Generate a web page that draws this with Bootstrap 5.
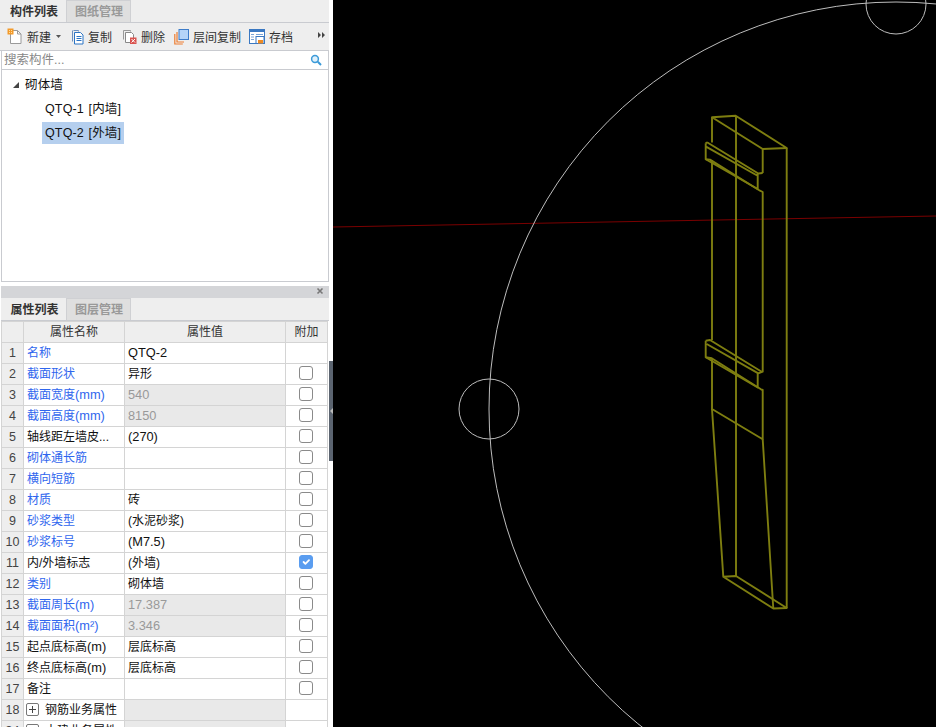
<!DOCTYPE html>
<html lang="zh">
<head>
<meta charset="utf-8">
<link href="https://cdn.jsdelivr.net/npm/bootstrap@5.3.0/dist/css/bootstrap.min.css" rel="stylesheet">
<style>
html,body{height:727px;overflow:hidden;background:#000}
body{font-family:"Liberation Sans","Noto Sans CJK SC",sans-serif;font-size:12.5px;line-height:1;color:#222}
.shell{height:727px}
.side{width:333px;flex:none;background:#fff;overflow:hidden}
.stage{flex:1;background:#000;position:relative;overflow:hidden}
.stage svg{display:block;width:100%;height:100%}
.tabrow{height:23px;background:#eeeeee;border-bottom:1px solid #c9cbd0;margin-right:4px}
.tabitem{width:66px;height:22px;padding:1px 0 0 2px;display:flex;align-items:center;justify-content:center;font-size:12px;font-weight:700;color:#333}
.tabitem.off{width:65px;background:#dfdfdf;color:#999;border:1px solid #cfd0d3;border-bottom:0;font-weight:700;padding:0 0 0 1px}
.tools{height:28px;background:#eeeeee;border-bottom:1px solid #c9cbd0;margin-right:4px;padding-left:7px;position:relative}
.tl{display:flex;align-items:center;color:#333;font-size:12px;white-space:nowrap}
.tl svg{flex:none;display:block}
.tl span{padding-top:2px}
.more{position:absolute;left:318px;top:9px;font-size:0}
.searchbar{height:19px;margin:0 4px 0 1px;border-left:1px solid #c9cbd0;border-right:1px solid #c9cbd0;border-bottom:1px solid #c9cbd0;padding-left:2px;color:#888;font-size:12.5px;background:#fff}
.treebox{height:212px;margin:0 4px 0 1px;border:1px solid #c9cbd0;border-top:0;background:#fff;padding-top:3px}
.treeline{height:24px;display:flex;align-items:center}
.treeline.kid{padding-left:40px}
.treeline .lbl{padding:0 3px;height:22px;display:flex;align-items:center;color:#111;font-size:12.5px;word-spacing:1px;letter-spacing:.15px}
.treeline .lbl.sel{background:#b5cfee}
.root{padding-left:11px;gap:6px}
.gap5{height:4px;margin-right:4px;background:#fff}
.closebar{height:12px;margin:0 4px 0 1px;background:#d4d5d8;position:relative;font-size:9px}
.xmark{position:absolute;left:315px;top:1px}
.tabrow.low{margin:0 4px 0 1px;height:23px}
.tabrow.low .tabitem{width:65px}
.tabrow.low .tabitem.off{padding-top:1px}
.tablewrap{margin-left:1px;width:327px;position:relative}
.table.proptable{table-layout:fixed;width:326px;margin:0;border-collapse:collapse;font-size:12px;--bs-table-bg:transparent}
.table.proptable>:not(caption)>*>*{padding:0 3px;height:21px;border:1px solid #d4d4d4;vertical-align:middle;color:#111;white-space:nowrap;overflow:hidden;line-height:1;box-shadow:none}
.table.proptable>thead>tr>th{background:#eeeeee;font-weight:400;text-align:center;color:#333}
.table.proptable>tbody>tr>td.idx{background:#eeeeee;text-align:center;color:#444;padding:0;font-size:12.5px}
.table.proptable>tbody>tr>td.blu{color:#2f66ee}
.table.proptable>tbody>tr>td.ro{background:#e9e9e9;color:#999}
.table.proptable>tbody>tr>td.ctr{text-align:center;padding:0}
.lat{font-size:12.8px}
.tick{width:14px;height:14px;border:1px solid #8a8a8a;border-radius:3px;display:block;float:none}
.form-check-input.tick{margin:-2px 7px 0 13px;border-radius:3px}
.tick:checked{background-color:#5a9df0;border-color:#5a9df0}
.plusbox{display:inline-flex;width:13px;height:13px;border:1px solid #777;border-radius:2px;align-items:center;justify-content:center;margin:-2px 6px 0 -1px;vertical-align:middle}
.gripbar{position:absolute;left:329px;top:361px;width:4px;height:100px;background:#5b6470}
.griptri{position:absolute;left:330px;top:408px}
</style>
</head>
<body>
<div class="shell d-flex">
  <div class="side position-relative">
    <div class="tabrow d-flex">
      <div class="tabitem">构件列表</div>
      <div class="tabitem off">图纸管理</div>
    </div>
    <div class="tools d-flex align-items-center">
      <div class="tl" style="width:64px">
        <svg width="16" height="17" viewBox="0 0 16 17" class="me-1"><path d="M3.5 2.5h7l3.5 3.5v9.5H3.5z" fill="#fff" stroke="#9a9a9a"/><path d="M10.5 2.5V6H14" fill="none" stroke="#9a9a9a"/><rect x="0.5" y="0.5" width="6" height="6" fill="#f39a2a"/><path d="M2 2h1v1H2zM4 4h1v1H4zM4 2h1v1H4zM2 4h1v1H2z" fill="#ffe0a0"/></svg>
        <span>新建</span>
        <svg width="5" height="3" viewBox="0 0 5 3" class="ms-auto" style="margin-right:10px"><path d="M0 0h5L2.5 3z" fill="#555"/></svg>
      </div>
      <div class="tl" style="width:51px">
        <svg width="13" height="16" viewBox="0 0 13 16" class="me-1"><path d="M2.5 1.5h5v1" fill="none" stroke="#6b8fc0"/><path d="M1.5 1.5v11" stroke="#6b8fc0"/><path d="M3.5 3.5h6l2.5 2.5v9H3.5z" fill="#fff" stroke="#2c74c4"/><path d="M5.5 7.5h5M5.5 9.5h5M5.5 11.5h5" stroke="#2c74c4"/></svg>
        <span>复制</span>
      </div>
      <div class="tl" style="width:52px">
        <svg width="15" height="15" viewBox="0 0 15 15" class="me-1"><path d="M1.5 1.5h7v1M1.5 1.5v9" fill="none" stroke="#999"/><path d="M3.5 3.5h6l2 2v8h-8z" fill="#fff" stroke="#888"/><rect x="8" y="8.5" width="6.5" height="6.5" fill="#d9534f"/><path d="M9.5 10l3.5 3.5M13 10l-3.5 3.5" stroke="#fff"/></svg>
        <span>删除</span>
      </div>
      <div class="tl" style="width:75px">
        <svg width="15" height="16" viewBox="0 0 15 16" class="me-1"><path d="M.8 5v10h8" fill="none" stroke="#ed7d31" stroke-width="1.2"/><path d="M3 3v10h7" fill="none" stroke="#ed7d31" stroke-width="1.2"/><rect x="5" y=".5" width="9.5" height="10" fill="#b4d4f8" stroke="#3d7cc9"/></svg>
        <span>层间复制</span>
      </div>
      <div class="tl">
        <svg width="16" height="15" viewBox="0 0 16 15" class="me-1"><rect x=".5" y=".5" width="15" height="14" fill="#fff" stroke="#3a78c2"/><rect x="0" y="0" width="16" height="3" fill="#3a78c2"/><path d="M2 5.5h3M2 8h3M2 10.5h3M7 5.5h7" stroke="#7aa4d6"/><rect x="7" y="7.5" width="8" height="7" fill="#fff" stroke="#3a78c2"/><rect x="9" y="11" width="5" height="3.5" fill="#ee8a22"/></svg>
        <span>存档</span>
      </div>
      <svg class="more" width="7" height="6" viewBox="0 0 7 6"><path d="M0 0l3 3-3 3zM4 0l3 3-3 3z" fill="#444"/></svg>
    </div>
    <div class="searchbar d-flex align-items-center justify-content-between">
      <span>搜索构件...</span>
      <svg width="12" height="12" viewBox="0 0 12 12" style="margin-right:6px"><circle cx="5" cy="5" r="3.4" fill="#dff0fb" stroke="#3b9ad8" stroke-width="1.5"/><path d="M7.8 7.8L11 11" stroke="#3b9ad8" stroke-width="2"/></svg>
    </div>
    <div class="treebox">
      <div class="treeline root">
        <svg width="6" height="6" viewBox="0 0 6 6"><path d="M6 0v6H0z" fill="#444"/></svg>
        <span class="lbl ps-0">砌体墙</span>
      </div>
      <div class="treeline kid"><span class="lbl">QTQ-1 [内墙]</span></div>
      <div class="treeline kid"><span class="lbl sel">QTQ-2 [外墙]</span></div>
    </div>
    <div class="gap5"></div>
    <div class="closebar"><svg class="xmark" width="9" height="9" viewBox="0 0 9 9"><path d="M1.5 1.5l5 5M6.5 1.5l-5 5" stroke="#777" stroke-width="1.6"/></svg></div>
    <div class="tabrow low d-flex">
      <div class="tabitem">属性列表</div>
      <div class="tabitem off">图层管理</div>
    </div>
    <div class="tablewrap">
      <table class="table proptable">
        <colgroup><col style="width:22px"><col style="width:101px"><col style="width:161px"><col style="width:42px"></colgroup>
        <thead><tr><th></th><th>属性名称</th><th>属性值</th><th>附加</th></tr></thead>
        <tbody id="props">
          <tr><td class="idx">1</td><td class="blu">名称</td><td class="lat">QTQ-2</td><td class="ctr"></td></tr>
          <tr><td class="idx">2</td><td class="blu">截面形状</td><td>异形</td><td class="ctr"><input class="form-check-input tick" type="checkbox"></td></tr>
          <tr><td class="idx">3</td><td class="blu">截面宽度<span class="lat">(mm)</span></td><td class="ro lat">540</td><td class="ctr"><input class="form-check-input tick" type="checkbox"></td></tr>
          <tr><td class="idx">4</td><td class="blu">截面高度<span class="lat">(mm)</span></td><td class="ro lat">8150</td><td class="ctr"><input class="form-check-input tick" type="checkbox"></td></tr>
          <tr><td class="idx">5</td><td>轴线距左墙皮...</td><td class="lat">(270)</td><td class="ctr"><input class="form-check-input tick" type="checkbox"></td></tr>
          <tr><td class="idx">6</td><td class="blu">砌体通长筋</td><td></td><td class="ctr"><input class="form-check-input tick" type="checkbox"></td></tr>
          <tr><td class="idx">7</td><td class="blu">横向短筋</td><td></td><td class="ctr"><input class="form-check-input tick" type="checkbox"></td></tr>
          <tr><td class="idx">8</td><td class="blu">材质</td><td>砖</td><td class="ctr"><input class="form-check-input tick" type="checkbox"></td></tr>
          <tr><td class="idx">9</td><td class="blu">砂浆类型</td><td>(水泥砂浆)</td><td class="ctr"><input class="form-check-input tick" type="checkbox"></td></tr>
          <tr><td class="idx">10</td><td class="blu">砂浆标号</td><td class="lat">(M7.5)</td><td class="ctr"><input class="form-check-input tick" type="checkbox"></td></tr>
          <tr><td class="idx">11</td><td>内/外墙标志</td><td>(外墙)</td><td class="ctr"><input class="form-check-input tick" type="checkbox" checked></td></tr>
          <tr><td class="idx">12</td><td class="blu">类别</td><td>砌体墙</td><td class="ctr"><input class="form-check-input tick" type="checkbox"></td></tr>
          <tr><td class="idx">13</td><td class="blu">截面周长<span class="lat">(m)</span></td><td class="ro lat">17.387</td><td class="ctr"><input class="form-check-input tick" type="checkbox"></td></tr>
          <tr><td class="idx">14</td><td class="blu">截面面积<span class="lat">(m²)</span></td><td class="ro lat">3.346</td><td class="ctr"><input class="form-check-input tick" type="checkbox"></td></tr>
          <tr><td class="idx">15</td><td>起点底标高<span class="lat">(m)</span></td><td>层底标高</td><td class="ctr"><input class="form-check-input tick" type="checkbox"></td></tr>
          <tr><td class="idx">16</td><td>终点底标高<span class="lat">(m)</span></td><td>层底标高</td><td class="ctr"><input class="form-check-input tick" type="checkbox"></td></tr>
          <tr><td class="idx">17</td><td>备注</td><td></td><td class="ctr"><input class="form-check-input tick" type="checkbox"></td></tr>
          <tr><td class="idx">18</td><td><span class="plusbox"><svg width="7" height="7" viewBox="0 0 7 7"><path d="M3.5 0v7M0 3.5h7" stroke="#444"/></svg></span>钢筋业务属性</td><td class="ro"></td><td class="ctr"></td></tr>
          <tr><td class="idx">34</td><td><span class="plusbox"><svg width="7" height="7" viewBox="0 0 7 7"><path d="M3.5 0v7M0 3.5h7" stroke="#444"/></svg></span>土建业务属性</td><td class="ro"></td><td class="ctr"></td></tr>
        </tbody>
      </table>
    </div>
    <div class="gripbar"></div>
    <svg class="griptri" width="3" height="6" viewBox="0 0 3 6"><path d="M3 0v6L0 3z" fill="#bbb"/></svg>
  </div>
  <div class="stage">
    <svg viewBox="333 0 603 727" xmlns="http://www.w3.org/2000/svg" preserveAspectRatio="none">
      <line x1="333" y1="227" x2="936" y2="216" stroke="#7a0000" stroke-width="1"/>
      <g fill="none" stroke="#bdbdbd" stroke-width="1">
        <circle cx="896" cy="409" r="407"/>
        <circle cx="489" cy="409" r="30"/>
        <circle cx="896" cy="4" r="30"/>
      </g>
      <g fill="none" stroke="#7e7e10" stroke-width="1.9" stroke-linejoin="round">
        <path d="M712 117.3L735.7 115.7L786.7 148L762.7 149L712 117.3Z"/>
        <path d="M712 117.3V142.5M736 116V576M786.7 148V608M762.7 149V173"/>
        <path d="M707 142.3L758.3 173.5L762.7 173M705.7 143.3V159.3L757.7 189V174L758.3 173.5M706 146.7L758 176"/>
        <path d="M707 142.3L705.7 143.3M705.7 159.3L710 159.6L760 190.7L762.7 192V371.7L758.3 373.3"/>
        <path d="M712 160V340"/>
        <path d="M705.7 340.7L710 340L761.7 371.7M705.7 340.7V357.3L757.7 387.5V373.3M706.7 344L758.3 373.3L757.7 373"/>
        <path d="M705.7 357.3L711.7 358.3L761 389.3L762.7 390V439.3L712 409V358.3"/>
        <path d="M712 409L723.3 576.7L736 576L786.7 608L773.3 608.5L723.3 576.7"/>
        <path d="M762.7 439.3L773.3 608.5"/>
      </g>
    </svg>
  </div>
</div>
<script src="https://cdn.jsdelivr.net/npm/bootstrap@5.3.0/dist/js/bootstrap.bundle.min.js"></script>
</body>
</html>
